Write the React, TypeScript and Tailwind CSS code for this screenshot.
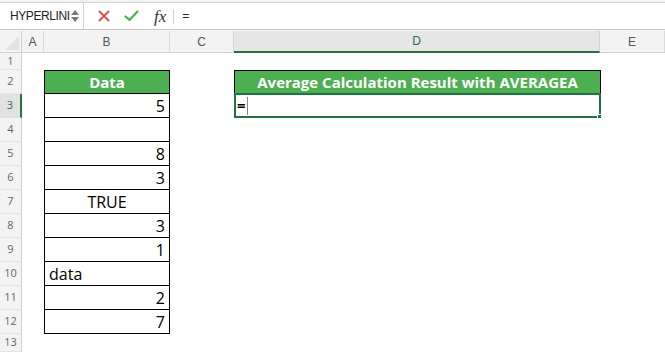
import React from 'react';

const cols = [
  { key: 'A', w: 'w-[22px]' },
  { key: 'B', w: 'w-[126px]' },
  { key: 'C', w: 'w-[64px]' },
  { key: 'D', w: 'w-[366px]' },
  { key: 'E', w: 'flex-1' },
];

const data: { v: string; align: 'right' | 'center' | 'left' }[] = [
  { v: '5', align: 'right' },
  { v: '', align: 'right' },
  { v: '8', align: 'right' },
  { v: '3', align: 'right' },
  { v: 'TRUE', align: 'center' },
  { v: '3', align: 'right' },
  { v: '1', align: 'right' },
  { v: 'data', align: 'left' },
  { v: '2', align: 'right' },
  { v: '7', align: 'right' },
];

function RowHead({ n, active }: { n: number; active?: boolean }) {
  return (
    <div
      className={
        active
          ? 'w-[22px] shrink-0 flex items-center justify-center bg-[#e2e2e2] border-r-2 border-[#217346] border-b border-b-[#dcdcdc] text-[11px] text-[#217346]'
          : 'w-[22px] shrink-0 flex items-center justify-center bg-[#f3f3f3] border-r border-[#cfcfcf] border-b border-b-[#e4e4e4] text-[11px] text-[#666]'
      }
    >
      {n}
    </div>
  );
}

export default function App() {
  return (
    <div className="w-[665px] h-[352px] overflow-hidden bg-white font-['Open_Sans',sans-serif] text-black">
      {/* Formula bar */}
      <div className="h-[3px] bg-[#f1f1f1] border-b border-[#d4d4d4]" />
      <div className="h-[27px] flex items-center border-b border-[#c4c4c4]">
        <div className="w-[84px] h-full flex items-center justify-between pl-[10px] pr-[4px] border-r border-[#d4d4d4]">
          <span className="text-[12px] tracking-[-0.4px] text-[#222] font-['Liberation_Sans',sans-serif]">HYPERLINI</span>
          <div className="flex flex-col items-center gap-[2px]">
            <div className="w-0 h-0 border-x-[4px] border-x-transparent border-b-[5px] border-b-[#777]" />
            <div className="w-0 h-0 border-x-[4px] border-x-transparent border-t-[5px] border-t-[#777]" />
          </div>
        </div>
        <div className="w-[14px]" />
        <svg width="12" height="12" viewBox="0 0 12 12">
          <path d="M1.5 1.5 L10.5 10.5 M10.5 1.5 L1.5 10.5" stroke="#e05252" strokeWidth="2" strokeLinecap="round" />
        </svg>
        <svg width="15" height="12" viewBox="0 0 15 12" className="ml-[14px]">
          <path d="M1.5 6.5 L5.5 10 L13.5 1.5" stroke="#4caf50" strokeWidth="2.2" fill="none" strokeLinecap="round" strokeLinejoin="round" />
        </svg>
        <span className="ml-[15px] text-[17px] italic font-['Liberation_Serif',serif] text-[#333] leading-none">
          fx
        </span>
        <div className="ml-[7px] w-px h-[15px] bg-[#d0d0d0]" />
        <span className="ml-[8px] text-[12px] text-[#222] font-['Liberation_Sans',sans-serif]">=</span>
      </div>
      <div className="h-px bg-[#f5f5f5]" />

      {/* Column headers */}
      <div className="flex h-[22px] bg-[#f3f3f3] border-b border-[#d0d0d0] text-[12px] text-[#555] font-['Liberation_Sans',sans-serif]">
        <div className="w-[22px] shrink-0 relative border-r border-[#cfcfcf]">
          <div className="absolute right-[2px] bottom-[2px] w-0 h-0 border-l-[14px] border-l-transparent border-b-[14px] border-b-[#dfe3df]" />
        </div>
        {cols.map((c) =>
          c.key === 'D' ? (
            <div
              key={c.key}
              className={`${c.w} shrink-0 flex items-center justify-center bg-[#e6e6e6] border-b-2 border-[#217346] -mb-px text-[#217346] border-r border-r-[#d0d0d0]`}
            >
              {c.key}
            </div>
          ) : (
            <div key={c.key} className={`${c.w} shrink-0 flex items-center justify-center border-r border-[#dadada]`}>
              {c.key}
            </div>
          )
        )}
      </div>

      {/* Row 1 */}
      <div className="flex h-[17px]">
        <RowHead n={1} />
      </div>

      {/* Row 2: headers */}
      <div className="flex h-[24px]">
        <RowHead n={2} />
        <div className="w-[22px] shrink-0" />
        <div className="w-[126px] shrink-0 flex items-center justify-center bg-[#4caf50] border border-black text-white font-bold text-[15px]">
          Data
        </div>
        <div className="w-[64px] shrink-0" />
        <div className="w-[367px] shrink-0 flex items-center justify-center bg-[#4caf50] border border-black text-white font-bold text-[15px]">
          Average Calculation Result with AVERAGEA
        </div>
      </div>

      {/* Rows 3-12 */}
      {data.map((d, i) => {
        const row = i + 3;
        return (
          <div key={row} className="flex h-[24px]">
            <RowHead n={row} active={row === 3} />
            <div className="w-[22px] shrink-0" />
            <div
              className={`w-[126px] shrink-0 flex items-center border-x border-b border-black text-[16px] px-[4px] ${
                d.align === 'right' ? 'justify-end' : d.align === 'center' ? 'justify-center' : 'justify-start'
              }`}
            >
              {d.v}
            </div>
            <div className="w-[64px] shrink-0" />
            {row === 3 && (
              <div className="w-[367px] shrink-0 relative -mt-px h-[25px] border-2 border-[#217346] flex items-center pl-[1px]">
                <span className="text-[15px] font-bold leading-none">=</span>
                <div className="ml-[1px] w-px h-[18px] bg-[#888]" />
                <div className="absolute -right-[3px] -bottom-[3px] w-[5px] h-[5px] bg-[#217346] border border-white" />
              </div>
            )}
          </div>
        );
      })}

      {/* Row 13 */}
      <div className="flex h-[18px]">
        <RowHead n={13} />
      </div>
    </div>
  );
}
